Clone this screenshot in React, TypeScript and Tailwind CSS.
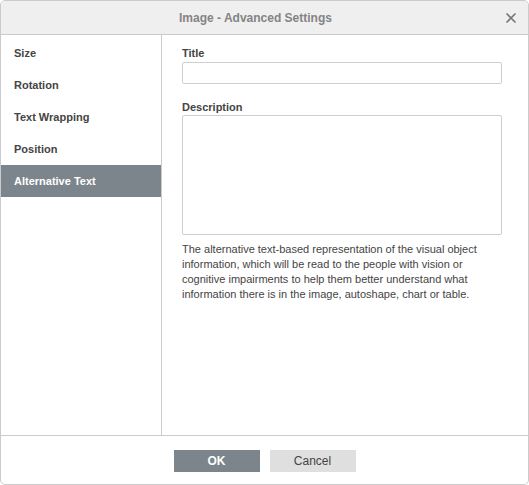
const tabs = ["Size", "Rotation", "Text Wrapping", "Position", "Alternative Text"];

export default function App() {
  const active = "Alternative Text";

  return (
    <div className="h-[485px] w-[529px] font-['Liberation_Sans',Arial,sans-serif] text-[11px] text-[#444]">
      <div className="flex h-full w-full flex-col overflow-hidden rounded-[5px] border border-[#cbcbcb] bg-white">
        {/* header */}
        <div className="relative flex h-[34px] shrink-0 items-center justify-center border-b border-[#cbcbcb] bg-[#efefef] pr-[18px]">
          <span className="text-[12px] font-bold text-[#848484]">Image - Advanced Settings</span>
          <button className="absolute right-[11px] top-[11px] flex h-[12px] w-[12px] items-center justify-center">
            <svg width="12" height="12" viewBox="0 0 12 12" fill="none" stroke="#777" strokeWidth="1.6">
              <path d="M1.5 1.5l9 9M10.5 1.5l-9 9" />
            </svg>
          </button>
        </div>

        {/* body */}
        <div className="flex h-[400px] shrink-0">
          <div className="w-[161px] shrink-0 border-r border-[#cbcbcb] pt-[2px]">
            {tabs.map((t) => (
              <div
                key={t}
                className={
                  t === active
                    ? "flex h-[32px] items-center bg-[#7d858c] pl-[13px] font-bold text-white"
                    : "flex h-[32px] items-center pl-[13px] font-bold text-[#444]"
                }
              >
                {t}
              </div>
            ))}
          </div>

          <div className="flex-1 pl-[20px] pt-[10px]">
            <label className="block h-[16px] leading-[16px] font-bold">Title</label>
            <input
              type="text"
              className="mt-px block h-[22px] w-[320px] rounded-[2px] border border-[#cfcfcf] bg-white px-1 outline-none"
            />
            <label className="mt-[15px] block h-[16px] leading-[16px] font-bold">Description</label>
            <textarea className="block h-[120px] w-[320px] resize-none rounded-[2px] border border-[#cfcfcf] bg-white p-1 outline-none" />
            <p className="mt-[7px] w-[320px] leading-[15px]">
              The alternative text-based representation of the visual object information, which will be read to the
              people with vision or cognitive impairments to help them better understand what information there is in
              the image, autoshape, chart or table.
            </p>
          </div>
        </div>

        {/* footer */}
        <div className="flex flex-1 justify-center gap-[10px] border-t border-[#cbcbcb] pt-[14px]">
          <button className="h-[22px] w-[86px] bg-[#7d858c] text-[12px] font-bold text-white">OK</button>
          <button className="h-[22px] w-[86px] bg-[#dfdfdf] text-[12px] text-[#444]">Cancel</button>
        </div>
      </div>
    </div>
  );
}
